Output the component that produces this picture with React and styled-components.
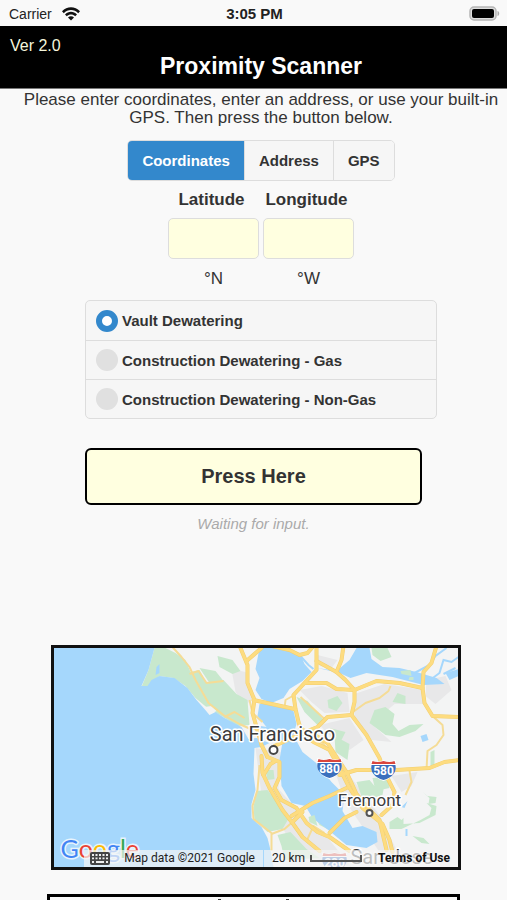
import React, { useState } from "react";
import styled, { createGlobalStyle } from "styled-components";

const LAND_USES = [
  "Vault Dewatering",
  "Construction Dewatering - Gas",
  "Construction Dewatering - Non-Gas",
];

const TABS = ["Coordinates", "Address", "GPS"];

const HIGHWAYS = [
  // 101 through Marin
  "M241 648L248 665L248 683L255 700L253 713L257 727L262 745L268 757",
  "M247 661L262 648",
  // Richmond bridge
  "M254 700L272 704L295 709",
  // I-80 and the north bay
  "M317 646L317 670L305 683L294 695L296 709L299 722L303 734",
  "M272 646L290 650L300 655L308 653L314 646",
  "M317 661L337 672L346 680L355 690",
  "M344 646L342 660L337 672",
  "M306 683L327 683L337 689L355 690L377 681L400 683L423 688L425 703L433 716L460 717",
  "M437 646L432 663L424 672L423 688",
  // 24 and 680
  "M355 690L355 702L352 715L367 735L380 758L385 772L395 792L393 805L382 815",
  "M352 715L328 717L318 727L303 733L275 746",
  // east shore
  "M303 734L314 742L330 750L342 772L350 788L363 808L383 824L390 840L393 852",
  "M312 733L328 743L337 757L347 772L357 794L370 810L380 820L387 850",
  "M340 775L357 770L397 770L430 768L445 762L460 760",
  // bridges over the south bay
  "M292 816L313 803L330 796L347 788",
  "M330 833L345 818L357 812",
  // peninsula
  "M268 757L280 762L280 777L275 788L282 800L297 808L307 823L318 832L330 837L350 851",
  "M262 756L263 773L270 788L283 810L293 823L303 837L320 851",
  "M264 775L271 764L276 761",
  "M293 822L303 812",
];

const ROADS = [
  "M172 646L182 657L190 667L196 680L209 703L224 715L240 724L251 729",
  "M190 674L199 671L207 683L224 681",
  "M225 717L235 712L245 718",
  "M250 700L253 713L263 722",
  "M295 695L286 700L285 708",
  "M301 697L313 708L325 719",
  "M352 713L366 703L380 698L389 691L391 686",
  "M433 716L443 725L444 735L437 745L428 751L427 770",
  "M410 771L412 782L406 795",
  "M260 765L258 790L253 806L254 819L272 833L272 851",
  "M272 834L285 829L293 822",
  "M250 728L262 730",
  "M303 728L320 740L334 755",
  "M308 839L314 826L325 833",
];

const App = () => {
  const [tab, setTab] = useState("Coordinates");
  const [use, setUse] = useState(LAND_USES[0]);

  return (
    <Page>
      <GlobalStyle />
      <StatusBar>
        <Carrier>
          Carrier
          <WifiIcon />
        </Carrier>
        <Clock>3:05 PM</Clock>
        <BatteryIcon />
      </StatusBar>

      <Header>
        <Version>Ver 2.0</Version>
        <Title>Proximity Scanner</Title>
      </Header>

      <Entry>
        <Intro>
          Please enter coordinates, enter an address, or use your built-in
          GPS. Then press the button below.
        </Intro>
        <Tabs>
          {TABS.map((name) => (
            <Tab key={name} type="button" $active={tab === name} onClick={() => setTab(name)}>
              {name}
            </Tab>
          ))}
        </Tabs>
        <Coords>
          <Field>
            <label htmlFor="lat">Latitude</label>
            <CoordInput id="lat" />
            <span>°N</span>
          </Field>
          <Field>
            <label htmlFor="lng">Longitude</label>
            <CoordInput id="lng" />
            <span>°W</span>
          </Field>
        </Coords>
      </Entry>

      <RadioList role="radiogroup">
        {LAND_USES.map((name) => (
          <RadioRow key={name}>
            <Radio type="radio" name="use" checked={use === name} onChange={() => setUse(name)} />
            {name}
          </RadioRow>
        ))}
      </RadioList>

      <PressButton type="button">Press Here</PressButton>
      <Status>Waiting for input.</Status>

      <MapBox>
        <BayMap />
        <MapBar>
          <KeyButton type="button" aria-label="Keyboard shortcuts">
            <KeyboardIcon />
          </KeyButton>
          <MapCell>Map data ©2021 Google</MapCell>
          <ScaleCell>
            20 km
            <ScaleLine />
          </ScaleCell>
          <Terms href="#terms">Terms of Use</Terms>
        </MapBar>
      </MapBox>

      <ResultBox>
        <Tick />
        <Tick />
      </ResultBox>
    </Page>
  );
};

export default App;

const WifiIcon = () => (
  <svg width="18" height="14" viewBox="0 0 18 14" fill="#111">
    <path d="M0 4.3C5-1.1 13-1.1 18 4.3L16.2 6.2C12.2 2 5.8 2 1.8 6.2Z" />
    <path d="M3 7.4C6.4 3.9 11.6 3.9 15 7.4L13.2 9.2C10.8 6.8 7.2 6.8 4.8 9.2Z" />
    <path d="M6 10.4C7.7 8.8 10.3 8.8 12 10.4L9 13.5Z" />
  </svg>
);

const BatteryIcon = () => (
  <svg width="31" height="15" viewBox="0 0 31 15">
    <rect x="1" y="1" width="26" height="13" rx="4" fill="#ddd" stroke="#b5b5b5" strokeWidth="1.5" />
    <rect x="3" y="3" width="22" height="9" rx="2" fill="#000" />
    <path d="M28.5 5C30.8 5.6 30.8 9.4 28.5 10Z" fill="#aaa" />
  </svg>
);

const KeyboardIcon = () => (
  <svg width="20" height="13" viewBox="0 0 20 13">
    <rect width="20" height="13" rx="2" fill="#444" />
    <path
      d="M2 3H18M2 6.3H18"
      stroke="#eee"
      strokeWidth="1.8"
      strokeDasharray="2 1.5"
    />
    <path d="M2 10H4M6 10H14M16 10H18" stroke="#eee" strokeWidth="1.8" />
  </svg>
);

const Shield = ({ x, y, num }) => (
  <g transform={`translate(${x} ${y})`}>
    <path d="M-12 -10Q-6 -7 0 -10Q6 -7 12 -10Q14 -3 11 3Q8 8 0 11Q-8 8 -11 3Q-14 -3 -12 -10Z" fill="#fff" />
    <path d="M-11 -9Q-6 -7 0 -9Q6 -7 11 -9L12 -6H-12Z" fill="#d9453d" />
    <path d="M-12 -5H12Q13 1 10 4Q7 8 0 10Q-7 8 -10 4Q-13 1 -12 -5Z" fill="#3b6fbd" />
    <ShieldText y="5">{num}</ShieldText>
  </g>
);

const BayMap = () => (
  <MapSvg viewBox="54 648 405 219" preserveAspectRatio="xMidYMid slice" aria-label="Map of San Francisco Bay">
    <rect x="54" y="648" width="405" height="219" fill="#f3f4f4" />

    {/* built up areas */}
    <g fill="#e8e8e9">
      <path d="M232 669L246 672L253 698L246 706L236 692Z" />
      <path d="M318 655L338 660L332 668L320 666ZM300 690L322 686L348 693L350 712L325 713L312 702Z" />
      <path d="M355 694L385 684L424 690L426 704L395 704L372 724L392 742L372 740L355 716Z" />
      <path d="M320 725L350 718L364 740L350 750L335 740ZM427 680L446 676L452 690L436 704L426 696Z" />
      <path d="M256 748L281 752L279 789L300 812L330 840L352 867L300 855L262 795Z" />
      <path d="M335 770L352 778L380 815L398 852L380 852L345 800Z" />
      <path d="M392 776L418 772L412 786L402 792Z" />
    </g>

    {/* parks */}
    <g fill="#c8e8cd">
      <path d="M155 648H166L176 653L186 660L191 672L200 670L207 683L224 680L237 694L248 700L250 725L238 726L222 716L208 708L196 698L186 686L174 678L160 676L148 687H142L149 670Z" />
      <path d="M218 656L233 660L241 671L233 674L220 667ZM200 668L216 671L224 681L210 683Z" />
      <path d="M297 697L308 701L326 722L318 725L305 712ZM328 700L338 696L343 703L337 711L329 708Z" />
      <path d="M372 648H388L392 657L381 661L373 655ZM398 693L406 696V704L393 702Z" />
      <path d="M375 710L386 707L395 714L393 724L399 731L410 725L424 724L416 731L400 737L386 735L370 723Z" />
      <path d="M335 736L350 744L348 760L336 752ZM330 728L346 732L341 742Z" />
      <path d="M257 791L268 790L290 817L283 829L268 832L255 820L254 807ZM266 770L274 770L275 779L268 780Z" />
      <path d="M278 835L291 832L307 849L320 858L285 860L282 846Z" />
      <path d="M357 782L370 780L375 786L385 784L383 795L370 799L362 796Z" />
      <path d="M390 822L398 817L402 820L404 818V824L420 823L436 815L437 806L427 803L432 808L430 815L421 820L402 829L390 829Z" />
      <path d="M423 792L428 796L437 797L436 803L429 804L430 798ZM431 752L435 750V765L431 766ZM413 836L424 838L430 844L422 843Z" />
      <path d="M373 778L388 777L390 788L376 791ZM316 818L325 816L328 829L320 825Z" />
    </g>

    {/* ocean, bays and the delta */}
    <g fill="#a5d7fc">
      <path d="M54 648H155L149 670L142 686H148L152 680L160 676L175 678L188 688L197 700L205 709L210 715L216 712L225 718L242 727L249 739L257 738L270 743L262 747L255 748L254 774L256 790L252 804L252 818L262 827L268 838L271 850L274 867H54Z" />
      <path d="M260 648H284L302 657L305 664L312 672L303 681L290 689L284 698L272 703L262 699L256 690L260 678L256 669Z" />
      <path d="M260 704L274 703L294 711L297 724L293 738L285 742L273 733L259 733L256 725L267 727L258 716Z" />
      <path d="M283 742L296 739L303 752L318 764L332 782L345 795L343 811L353 828L363 826L377 832L378 842L367 848L347 845L330 831L313 818L306 806L292 803L282 786L280 760Z" />
      <path d="M318 668L337 671L350 660L357 648H370L372 659L383 667L400 668L417 672L437 678L445 684L424 685L393 677L367 673L351 678L340 673Z" />
      <path d="M421 736L427 734L429 740L423 742ZM446 673L459 669V676L450 680Z" />
      <path d="M402 807L408 801L405 808ZM406 829H408V836H406ZM157 667L160 664V673L156 675Z" />
    </g>
    <g fill="none" stroke="#a5d7fc" strokeWidth="2">
      <path d="M415 673L430 665L436 656L447 648M432 679L440 673L444 660L452 662L459 657M444 674L456 668M300 655L309 665L314 669" />
    </g>
    <g fill="#c8e8cd">
      <path d="M401 671L411 670L412 676L402 674ZM410 677H414V680H409ZM309 817L315 815L318 826L310 822Z" />
    </g>
    <path d="M205 707L212 706L217 711L211 714Z" fill="#f3f4f4" />

    <g fill="none" stroke="#f5dc96" strokeWidth="2" strokeLinejoin="round">
      {ROADS.map((d) => (
        <path key={d} d={d} />
      ))}
    </g>
    <g fill="none" stroke="#f2cf70" strokeWidth="4" strokeLinejoin="round" strokeLinecap="round">
      {HIGHWAYS.map((d) => (
        <path key={d} d={d} />
      ))}
    </g>
    <g fill="none" stroke="#fddc80" strokeWidth="3" strokeLinejoin="round" strokeLinecap="round">
      {HIGHWAYS.map((d) => (
        <path key={d} d={d} />
      ))}
    </g>

    <Shield x={330} y={768} num="880" />
    <Shield x={384} y={770} num="580" />
    <Shield x={335} y={862} num="280" />
    <circle cx="274" cy="750" r="4" fill="#fff" stroke="#444" strokeWidth="2" />
    <circle cx="370" cy="813" r="3" fill="#fff" stroke="#555" strokeWidth="2" />
    <CityText x="273" y="741" $size={20}>San Francisco</CityText>
    <CityText x="370" y="806" $size={17}>Fremont</CityText>
    <CityText x="392" y="864" $size={20}>San Jose</CityText>

    <LogoText x="61" y="858">
      <tspan fill="#4285f4">G</tspan>
      <tspan fill="#ea4335">o</tspan>
      <tspan fill="#fbbc05">o</tspan>
      <tspan fill="#4285f4">g</tspan>
      <tspan fill="#34a853">l</tspan>
      <tspan fill="#ea4335">e</tspan>
    </LogoText>
  </MapSvg>
);

const GlobalStyle = createGlobalStyle`
  * {
    box-sizing: border-box;
  }
  body {
    margin: 0;
    background-color: #f9f9f9;
    color: #333;
    font-family: "Liberation Sans", Arial, sans-serif;
  }
  button, input {
    font-family: inherit;
    color: inherit;
  }
`;

const Page = styled.div`
  height: 100vh;
  overflow: hidden;
  display: flex;
  flex-direction: column;

  > * {
    flex-shrink: 0;
  }
`;

const StatusBar = styled.div`
  display: grid;
  grid-template-columns: 1fr auto 1fr;
  align-items: center;
  height: 26px;
  padding: 1px 7px 0 9px;
  font-size: 14px;
  color: #222;

  > svg {
    justify-self: end;
  }
`;

const Carrier = styled.div`
  display: flex;
  align-items: center;
  gap: 10px;
`;

const Clock = styled.div`
  font-size: 15px;
  font-weight: 700;
`;

const Header = styled.header`
  height: 63px;
  padding: 11px 10px 0;
  background-color: #000;
  border-bottom: 1px solid #777;
`;

const Version = styled.div`
  font-size: 16px;
  line-height: 18px;
  color: #f6f6dc;
`;

const Title = styled.h1`
  margin: 0;
  padding-left: 15px;
  font-size: 23px;
  line-height: 23px;
  text-align: center;
  color: #fff;
`;

const Entry = styled.section`
  display: flex;
  flex-direction: column;
  align-items: center;
  padding-left: 15px;
`;

const Intro = styled.p`
  margin: 0 0 13px;
  padding-top: 2px;
  font-size: 17px;
  line-height: 18px;
  text-align: center;
`;

const Tabs = styled.div`
  display: flex;
  border: 1px solid #ddd;
  border-radius: 5px;
  overflow: hidden;
`;

const Tab = styled.button`
  height: 39px;
  padding: 0 14px;
  border: 0;
  border-right: 1px solid #ddd;
  background-color: ${(props) => (props.$active ? "#3388cc" : "#f6f6f6")};
  color: ${(props) => (props.$active ? "#fff" : "#333")};
  font-size: 15px;
  font-weight: 700;
  cursor: pointer;
  &:last-child {
    border-right: 0;
  }
`;

const Coords = styled.div`
  display: flex;
  gap: 4px;
  margin-top: 9px;
`;

const Field = styled.div`
  display: flex;
  flex-direction: column;
  align-items: center;
  font-size: 17px;
  line-height: 20px;

  label {
    padding-right: 4px;
    font-weight: 700;
  }
`;

const CoordInput = styled.input`
  width: 91px;
  height: 41px;
  margin: 8px 0 10px;
  border: 1px solid #ddd;
  border-radius: 5px;
  background-color: #ffffe0;
`;

const RadioList = styled.div`
  margin: 11px 70px 0 85px;
  border: 1px solid #ddd;
  border-radius: 5px;
  background-color: #f6f6f6;
`;

const RadioRow = styled.label`
  display: flex;
  align-items: center;
  gap: 4px;
  height: 39px;
  padding-left: 10px;
  font-size: 15px;
  font-weight: 700;
  & + & {
    border-top: 1px solid #ddd;
  }
`;

const Radio = styled.input`
  appearance: none;
  width: 22px;
  height: 22px;
  margin: 0;
  border-radius: 50%;
  background-color: #e0e0e0;
  &:checked {
    border: 6px solid #3388cc;
    background-color: #fff;
  }
`;

const PressButton = styled.button`
  height: 57px;
  margin: 29px 85px 0;
  border: 2px solid #000;
  border-radius: 6px;
  background-color: #ffffe0;
  font-size: 20px;
  font-weight: 700;
  cursor: pointer;
`;

const Status = styled.p`
  margin: 10px 0 0;
  font-size: 15px;
  line-height: 18px;
  font-style: italic;
  text-align: center;
  color: #aaa;
`;

const MapBox = styled.div`
  position: relative;
  height: 225px;
  margin: 112px 46px 0 51px;
  border: 3px solid #111;
  overflow: hidden;
`;

const MapSvg = styled.svg`
  display: block;
  width: 100%;
  height: 100%;
  font-family: Roboto, sans-serif;
`;

const CityText = styled.text`
  font-size: ${(props) => props.$size}px;
  fill: #3c3c3c;
  stroke: #fff;
  stroke-width: 3px;
  stroke-linejoin: round;
  paint-order: stroke;
  text-anchor: middle;
`;

const ShieldText = styled.text`
  font-size: 12px;
  font-weight: 700;
  fill: #fff;
  text-anchor: middle;
`;

const LogoText = styled.text`
  font-family: Lato, sans-serif;
  font-size: 25px;
  stroke: #e8f4fd;
  stroke-width: 3px;
  paint-order: stroke;
`;

/* translucent strip along the bottom edge of the map */
const MapBar = styled.div`
  position: absolute;
  right: 0;
  bottom: 0;
  display: flex;
  height: 17px;
  font-family: Roboto, sans-serif;
  font-size: 12px;
  line-height: 17px;
  color: #222;
`;

const MapCell = styled.div`
  padding: 0 8px;
  background-color: rgba(245, 245, 245, 0.7);
`;

const KeyButton = styled.button`
  display: flex;
  align-items: center;
  padding: 0 6px;
  border: 0;
  background-color: rgba(245, 245, 245, 0.7);
`;

const ScaleCell = styled(MapCell)`
  display: flex;
  gap: 5px;
  margin-left: 1px;
`;

const ScaleLine = styled.div`
  width: 52px;
  height: 7px;
  margin-top: 5px;
  border: 2px solid #555;
  border-top: 0;
`;

const Terms = styled.a`
  padding: 0 8px;
  background-color: rgba(245, 245, 245, 0.7);
  color: #111;
  font-weight: 700;
  text-decoration: none;
`;

const ResultBox = styled.div`
  display: flex;
  justify-content: center;
  gap: 65px;
  height: 80px;
  margin: 24px 47px 0;
  padding-top: 2px;
  border: 3px solid #000;
`;

const Tick = styled.i`
  width: 3px;
  height: 10px;
  background-color: #333;
`;
